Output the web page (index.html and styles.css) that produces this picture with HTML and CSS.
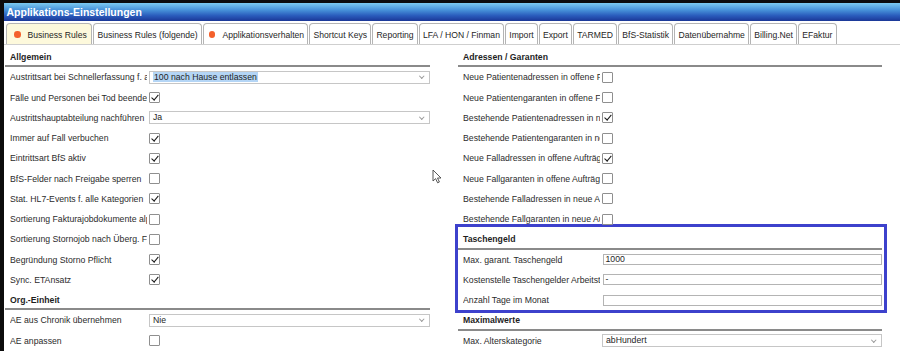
FILE: index.html
```html
<!DOCTYPE html>
<html>

<head>
    <meta charset="UTF-8">
    <title>Applikations-Einstellungen</title>
    <link rel="stylesheet" href="styles.css">
</head>

<body>
    <div class="frame">
        <div class="titlebar">Applikations-Einstellungen</div>

        <ul class="tabs">
            <li class="tab active"><span class="dot"></span>Business Rules</li>
            <li class="tab">Business Rules (folgende)</li>
            <li class="tab"><span class="dot"></span>Applikationsverhalten</li>
            <li class="tab">Shortcut Keys</li>
            <li class="tab">Reporting</li>
            <li class="tab">LFA / HON / Finman</li>
            <li class="tab">Import</li>
            <li class="tab">Export</li>
            <li class="tab">TARMED</li>
            <li class="tab">BfS-Statistik</li>
            <li class="tab">Datenübernahme</li>
            <li class="tab">Billing.Net</li>
            <li class="tab">EFaktur</li>
        </ul>

        <div class="content">
            <div class="col left">
                <div class="sec-head">Allgemein</div>
                <div class="row">
                    <span class="lbl">Austrittsart bei Schnellerfassung f. ambulante Fälle</span>
                    <div class="sel"><span class="picked">100 nach Hause entlassen</span></div>
                </div>
                <div class="row">
                    <span class="lbl">Fälle und Personen bei Tod beenden</span>
                    <span class="cb on"></span>
                </div>
                <div class="row">
                    <span class="lbl">Austrittshauptabteilung nachführen</span>
                    <div class="sel">Ja</div>
                </div>
                <div class="row">
                    <span class="lbl">Immer auf Fall verbuchen</span>
                    <span class="cb on"></span>
                </div>
                <div class="row">
                    <span class="lbl">Eintrittsart BfS aktiv</span>
                    <span class="cb on"></span>
                </div>
                <div class="row">
                    <span class="lbl">BfS-Felder nach Freigabe sperren</span>
                    <span class="cb"></span>
                </div>
                <div class="row">
                    <span class="lbl">Stat. HL7-Events f. alle Kategorien</span>
                    <span class="cb on"></span>
                </div>
                <div class="row">
                    <span class="lbl">Sortierung Fakturajobdokumente alphabetisch</span>
                    <span class="cb"></span>
                </div>
                <div class="row">
                    <span class="lbl">Sortierung Stornojob nach Überg. Fall</span>
                    <span class="cb"></span>
                </div>
                <div class="row">
                    <span class="lbl">Begründung Storno Pflicht</span>
                    <span class="cb on"></span>
                </div>
                <div class="row">
                    <span class="lbl">Sync. ETAnsatz</span>
                    <span class="cb on"></span>
                </div>

                <div class="sec-head">Org.-Einheit</div>
                <div class="row">
                    <span class="lbl">AE aus Chronik übernehmen</span>
                    <div class="sel">Nie</div>
                </div>
                <div class="row">
                    <span class="lbl">AE anpassen</span>
                    <span class="cb"></span>
                </div>
            </div>

            <div class="col right">
                <div class="sec-head">Adressen / Garanten</div>
                <div class="row">
                    <span class="lbl">Neue Patientenadressen in offene Fälle übernehmen</span>
                    <span class="cb"></span>
                </div>
                <div class="row">
                    <span class="lbl">Neue Patientengaranten in offene Fälle übernehmen</span>
                    <span class="cb"></span>
                </div>
                <div class="row">
                    <span class="lbl">Bestehende Patientenadressen in neue Fälle</span>
                    <span class="cb on"></span>
                </div>
                <div class="row">
                    <span class="lbl">Bestehende Patientengaranten in neue Fälle</span>
                    <span class="cb"></span>
                </div>
                <div class="row">
                    <span class="lbl">Neue Falladressen in offene Aufträge übernehmen</span>
                    <span class="cb on"></span>
                </div>
                <div class="row">
                    <span class="lbl">Neue Fallgaranten in offene Aufträge übernehmen</span>
                    <span class="cb"></span>
                </div>
                <div class="row">
                    <span class="lbl">Bestehende Falladressen in neue Aufträge</span>
                    <span class="cb"></span>
                </div>
                <div class="row">
                    <span class="lbl">Bestehende Fallgaranten in neue Aufträge</span>
                    <span class="cb"></span>
                </div>

                <div class="hl">
                    <div class="sec-head">Taschengeld</div>
                    <div class="row">
                        <span class="lbl">Max. garant. Taschengeld</span>
                        <div class="txt">1000</div>
                    </div>
                    <div class="row">
                        <span class="lbl">Kostenstelle Taschengelder Arbeitstherapie</span>
                        <div class="txt">-</div>
                    </div>
                    <div class="row">
                        <span class="lbl">Anzahl Tage im Monat</span>
                        <div class="txt"></div>
                    </div>
                </div>

                <div class="sec-head">Maximalwerte</div>
                <div class="row">
                    <span class="lbl">Max. Alterskategorie</span>
                    <div class="sel">abHundert</div>
                </div>
            </div>
        </div>

        <svg class="cursor" width="11" height="15" viewBox="0 0 11 15">
            <path d="M1 1 L1 12 L3.6 9.6 L5.6 13.8 L7.4 13 L5.5 9 L9 9 Z" fill="#fff" stroke="#444" stroke-width="0.9" stroke-linejoin="round" />
        </svg>
    </div>
</body>

</html>
```

FILE: styles.css
```css
html,
body {
    margin: 0;
    padding: 0;
    background: #fff;
}

body {
    font-family: "Liberation Sans", Arial, sans-serif;
    font-size: 8.7px;
    color: #2b2b2b;
}

.frame {
    position: relative;
    height: 351px;
    box-sizing: border-box;
    border-top: 3px solid #0c0c0c;
    border-left: 4px solid #0c0c0c;
    overflow: hidden;
}

.titlebar {
    height: 18px;
    line-height: 18px;
    padding-left: 2.5px;
    background: linear-gradient(#7ccaf0, #4690d8 40%, #2a5cbc 70%, #1b3797);
    color: #fff;
    font-weight: bold;
    font-size: 10.5px;
}

ul.tabs {
    list-style-type: none;
    display: flex;
    gap: 1px;
    margin: 0;
    padding: 2px 0 0 2px;
    height: 21px;
    border-bottom: 1px solid #cfcfcf;
    font-size: 8.6px;
}

.tab {
    display: flex;
    align-items: center;
    padding: 1px 3.2px 0 3.2px;
    border: 1px solid #b4b4b4;
    border-bottom: none;
    border-radius: 4px 4px 0 0;
    background: #fff;
    color: #262626;
    white-space: nowrap;
}

.tab.active {
    background: #fdf9dc;
    padding-left: 7px;
    padding-right: 4.5px;
}

.dot {
    display: inline-block;
    width: 6.5px;
    height: 6.5px;
    border-radius: 50%;
    background: #f4602c;
    margin-right: 7px;
}

.tab:nth-child(3) {
    padding-left: 5px;
}

.content {
    display: flex;
    gap: 28px;
    padding: 2px 0 0 1px;
}

.col.left {
    width: 425px;
}

.col.right {
    width: 424px;
}

.sec-head {
    height: 20.25px;
    box-sizing: border-box;
    display: flex;
    align-items: center;
    padding: 1.5px 0 0 5px;
    border-bottom: 2px solid #8a8a8a;
    font-weight: bold;
    color: #1e1e1e;
}

.row {
    height: 20.25px;
    display: flex;
    align-items: center;
    padding-left: 5px;
}

.lbl {
    width: 137px;
    flex: none;
    white-space: nowrap;
    overflow: hidden;
}

.cb {
    position: relative;
    width: 11px;
    height: 11px;
    box-sizing: border-box;
    margin-left: 2px;
    border: 1px solid #8f8f8f;
    border-radius: 1px;
    background: #fff;
}

.cb.on::after {
    content: "";
    position: absolute;
    left: 3px;
    top: 0;
    width: 2.5px;
    height: 6px;
    border: solid #1a1a1a;
    border-width: 0 1.5px 1.5px 0;
    transform: rotate(40deg);
}

.sel {
    position: relative;
    flex: 1;
    height: 13px;
    box-sizing: border-box;
    margin-left: 2px;
    padding-left: 3px;
    border: 1px solid #c6c6c6;
    background: #fff;
    line-height: 11px;
    color: #1e1e1e;
}

.sel::after {
    content: "";
    position: absolute;
    right: 6px;
    top: 2.5px;
    width: 2.5px;
    height: 2.5px;
    border: solid #9a9a9a;
    border-width: 0 1px 1px 0;
    transform: rotate(45deg);
}

.picked {
    background: #b4d5f5;
    padding: 0 1px;
}

.txt {
    flex: 1;
    height: 11px;
    box-sizing: border-box;
    margin-left: 2.5px;
    padding-left: 2px;
    border: 1px solid #b4b4b4;
    background: #fff;
    line-height: 9px;
    color: #1e1e1e;
}

.hl {
    margin: -5px -5px -3px -3px;
    padding: 2px 2px 0 0;
    border: 3px solid #3d41cc;
}

.cursor {
    position: absolute;
    left: 428px;
    top: 166px;
}
```
